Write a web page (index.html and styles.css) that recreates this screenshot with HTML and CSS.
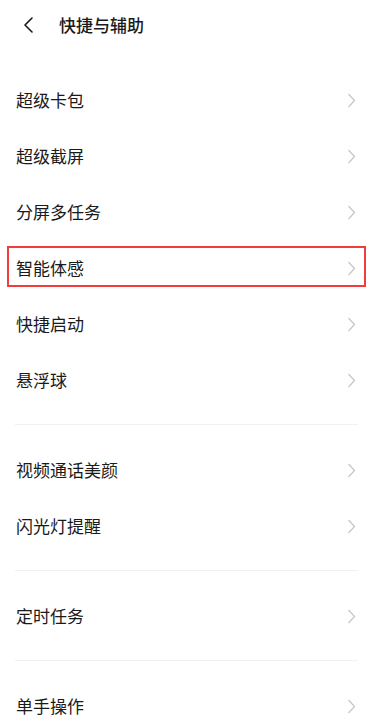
FILE: index.html
```html
<!DOCTYPE html>
<html lang="zh-CN">
<head>
<meta charset="utf-8">
<link rel="stylesheet" href="styles.css">
</head>
<body>
<div class="page">
  <header class="header">
    <svg class="back" viewBox="0 0 12 16" width="12" height="16"><path d="M10 1 L3 8 L10 15" fill="none" stroke="#1a1a1a" stroke-width="1.6" stroke-linecap="round" stroke-linejoin="round"/></svg>
    <h1 class="title">快捷与辅助</h1>
  </header>
  <div class="list">
    <div class="row"><span>超级卡包</span><svg class="chev" viewBox="0 0 9 15" width="9" height="15"><path d="M1.5 1 L7.5 7.5 L1.5 14" fill="none" stroke="#c8c8c8" stroke-width="1.3"/></svg></div>
    <div class="row"><span>超级截屏</span><svg class="chev" viewBox="0 0 9 15" width="9" height="15"><path d="M1.5 1 L7.5 7.5 L1.5 14" fill="none" stroke="#c8c8c8" stroke-width="1.3"/></svg></div>
    <div class="row"><span>分屏多任务</span><svg class="chev" viewBox="0 0 9 15" width="9" height="15"><path d="M1.5 1 L7.5 7.5 L1.5 14" fill="none" stroke="#c8c8c8" stroke-width="1.3"/></svg></div>
    <div class="row highlight"><span>智能体感</span><svg class="chev" viewBox="0 0 9 15" width="9" height="15"><path d="M1.5 1 L7.5 7.5 L1.5 14" fill="none" stroke="#c8c8c8" stroke-width="1.3"/></svg></div>
    <div class="row"><span>快捷启动</span><svg class="chev" viewBox="0 0 9 15" width="9" height="15"><path d="M1.5 1 L7.5 7.5 L1.5 14" fill="none" stroke="#c8c8c8" stroke-width="1.3"/></svg></div>
    <div class="row"><span>悬浮球</span><svg class="chev" viewBox="0 0 9 15" width="9" height="15"><path d="M1.5 1 L7.5 7.5 L1.5 14" fill="none" stroke="#c8c8c8" stroke-width="1.3"/></svg></div>
    <div class="divider"></div>
    <div class="row"><span>视频通话美颜</span><svg class="chev" viewBox="0 0 9 15" width="9" height="15"><path d="M1.5 1 L7.5 7.5 L1.5 14" fill="none" stroke="#c8c8c8" stroke-width="1.3"/></svg></div>
    <div class="row"><span>闪光灯提醒</span><svg class="chev" viewBox="0 0 9 15" width="9" height="15"><path d="M1.5 1 L7.5 7.5 L1.5 14" fill="none" stroke="#c8c8c8" stroke-width="1.3"/></svg></div>
    <div class="divider"></div>
    <div class="row"><span>定时任务</span><svg class="chev" viewBox="0 0 9 15" width="9" height="15"><path d="M1.5 1 L7.5 7.5 L1.5 14" fill="none" stroke="#c8c8c8" stroke-width="1.3"/></svg></div>
    <div class="divider"></div>
    <div class="row"><span>单手操作</span><svg class="chev" viewBox="0 0 9 15" width="9" height="15"><path d="M1.5 1 L7.5 7.5 L1.5 14" fill="none" stroke="#c8c8c8" stroke-width="1.3"/></svg></div>
  </div>
</div>
</body>
</html>
```

FILE: styles.css
```css
html, body {
  margin: 0;
  padding: 0;
  background: #ffffff;
}
body {
  font-family: "Noto Sans CJK SC", "Noto Sans", sans-serif;
  color: #1a1a1a;
  overflow: hidden;
}
.page {
  width: 374px;
  height: 719px;
  overflow: hidden;
}
.header {
  height: 50px;
  display: flex;
  align-items: center;
  padding-left: 22px;
}
.back {
  display: block;
  flex: none;
}
.title {
  margin: -1px 0 0 25px;
  font-size: 17px;
  font-weight: 500;
  line-height: 20px;
  color: #1a1a1a;
}
.list {
  padding-top: 22px;
}
.row {
  height: 56px;
  display: flex;
  align-items: center;
  justify-content: space-between;
  padding: 0 18px 0 16px;
  font-size: 17px;
  line-height: 20px;
  position: relative;
}
.chev {
  display: block;
  flex: none;
}
.highlight::after {
  content: "";
  position: absolute;
  left: 7px;
  right: 8px;
  top: 6px;
  bottom: 9px;
  border: 2px solid #f03c3c;
  pointer-events: none;
}
.divider {
  height: 1px;
  background: #f0f0f0;
  margin: 16px 16px 17px 15px;
}
```
